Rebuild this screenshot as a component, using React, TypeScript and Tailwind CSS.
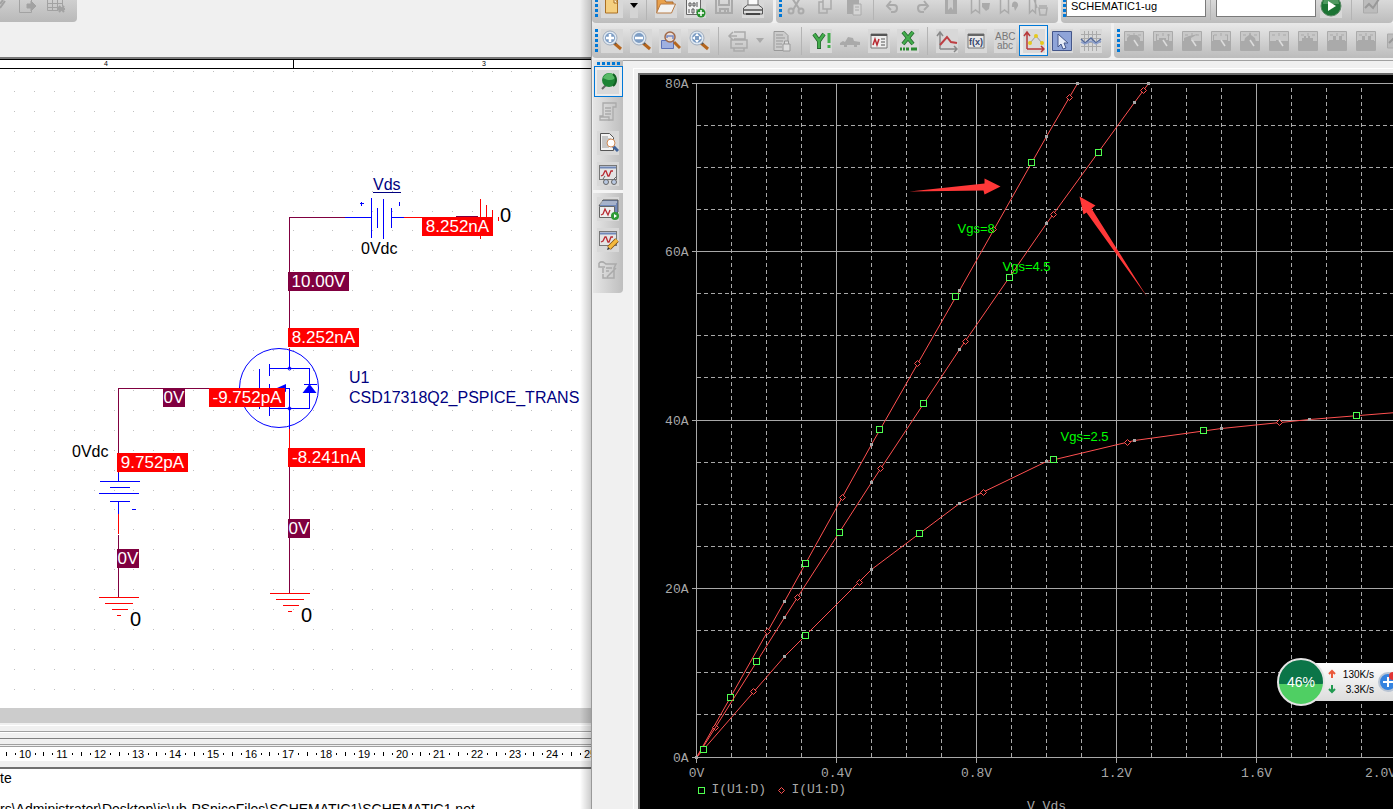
import React from 'react';

type Point = [number, number];

const IconSvg = ({ children }: { children: React.ReactNode }) => (
  <svg width="22" height="24" viewBox="0 0 22 24" fill="none" aria-hidden="true">
    {children}
  </svg>
);

const Lens = () => (
  <>
    <path d="M13 14l7 6" stroke="#b5651d" strokeWidth="3" />
    <path d="M13 13l2 2" stroke="#555" strokeWidth="2" />
    <circle cx="9" cy="9" r="6" fill="#7d9dc4" stroke="#dfe8f2" strokeWidth="2" />
    <circle cx="9" cy="9" r="7" stroke="#8796ab" strokeWidth="0.7" />
  </>
);

const PlotWindow = () => (
  <>
    <rect x="2.500" y="3.500" width="17" height="14" fill="#e4e4e4" stroke="#777" />
    <path d="M3 5.500h16" stroke="#7088b8" strokeWidth="2" />
    <path d="M4 14l2-1 2-4h1l2 5h1l2-5h2" stroke="#b82a32" strokeWidth="1.300" />
  </>
);

const icons: Record<string, React.ReactNode> = {
  'New file': (
    <>
      <path d="M4.500 4h12v15h-12z" fill="#f5cf7f" stroke="#aa6f22" />
      <path d="M13 4l4 5h-4z" fill="#fff3d0" stroke="#aa6f22" />
    </>
  ),
  'Open': (
    <>
      <path d="M2 18V5h7l2 3h7v4" fill="#e9a14c" stroke="#a9662a" />
      <path d="M1.500 19l4-9h15l-4 9z" fill="#f3f3f3" stroke="#b77b45" />
    </>
  ),
  'Append file': (
    <>
      <path d="M2.500 1.500h14v19h-14z" fill="#f2f2f2" stroke="#666" />
      <path d="M5 9h2v3H5zM9 9h2v3H9zM13 8v5M5 15v4M8 15h2v4H8zM13 15v4" stroke="#555" />
      <circle cx="17" cy="19" r="4.500" fill="#26902c" />
      <path d="M17 16v6M14 19h6" stroke="#fff" strokeWidth="1.500" />
    </>
  ),
  'Save': (
    <path d="M3 4h16v15H3zM6 4v7h10V4M7 19v-4h8v4M12 16v3" stroke="#aaa" strokeWidth="2" />
  ),
  'Print': (
    <>
      <path d="M6 12V2h10v10" fill="#fafafa" stroke="#777" />
      <path d="M1.500 20v-6l4-3h11l4 3v6z" fill="#ddd" stroke="#555" />
      <path d="M2 16h18" stroke="#777" strokeWidth="2" />
      <path d="M4 20h14" stroke="#444" strokeWidth="2" />
    </>
  ),
  'Cut': (
    <>
      <path d="M7 4l8 12M15 4L8 16" stroke="#aaa" strokeWidth="2" />
      <circle cx="6" cy="17" r="2.500" stroke="#aaa" strokeWidth="2" />
      <circle cx="16" cy="17" r="2.500" stroke="#aaa" strokeWidth="2" />
    </>
  ),
  'Copy': <path d="M9 4h8v11H9zM9 8H5v11h8v-4" stroke="#aaa" strokeWidth="1.500" />,
  'Paste': (
    <>
      <path d="M4 5h12v15H4z" fill="#aaa" />
      <path d="M10 10h8v11h-8z" fill="#d5d5d5" stroke="#aaa" />
      <path d="M12 13h4M12 16h4" stroke="#aaa" />
    </>
  ),
  'Undo': <path d="M9 7l-4 5 4 4M5 11h7c4 0 4 6 0 7H9" stroke="#aaa" strokeWidth="2" />,
  'Redo': <path d="M13 7l4 5-4 4M17 11h-7c-4 0-4 6 0 7h3" stroke="#aaa" strokeWidth="2" />,
  'Toggle bookmark': (
    <>
      <path d="M5 2h12v18H5z" fill="#aaa" />
      <path d="M8 4v12l3-3 2 3V4" fill="#ccc" />
    </>
  ),
  'Next bookmark': (
    <>
      <path d="M2.500 2v17l4-3 4 3V2" stroke="#aaa" strokeWidth="1.500" />
      <path d="M13 9h8l-1 6-3 2-4-4z" fill="#aaa" />
    </>
  ),
  'Previous bookmark': (
    <>
      <path d="M2.500 2v17l4-3 4 3V2" stroke="#aaa" strokeWidth="1.500" />
      <path d="M14 13c-1-8 7-6 6-1l-3 5-1-4z" fill="#aaa" />
    </>
  ),
  'Clear bookmarks': (
    <>
      <path d="M2.500 2v17l3-3 3 3V2M6 2l4 12" stroke="#aaa" strokeWidth="1.500" />
      <path d="M12 14h8l-1 7h-6zM12 12h8" stroke="#aaa" strokeWidth="1.500" />
    </>
  ),
  'Run': (
    <>
      <circle cx="11" cy="12" r="10" fill="#1c7434" stroke="#5d8a68" />
      <path d="M3 10a8 8 0 0 1 16 0z" fill="#4e9960" />
      <path d="M8 7v10l8-5z" fill="#fff" />
    </>
  ),
  'View results': (
    <>
      <path d="M3.500 5h14v14h-14z" fill="#bcbcbc" stroke="#aaa" />
      <path d="M5 14l4-4 4 4 6-9" stroke="#999" strokeWidth="2" />
    </>
  ),
  'Zoom in': (
    <>
      <Lens />
      <path d="M9 5v8M5 9h8" stroke="#fff" strokeWidth="2.500" />
    </>
  ),
  'Zoom out': (
    <>
      <Lens />
      <path d="M5 9h8" stroke="#fff" strokeWidth="2.500" />
    </>
  ),
  'Zoom area': (
    <>
      <path d="M2.500 11.500h12v8h-12z" fill="#9fb0e0" stroke="#5c72b8" />
      <path d="M15 13l6 6" stroke="#b5651d" strokeWidth="3" />
      <circle cx="11" cy="8" r="5" fill="#e8dcd6" stroke="#a06848" strokeWidth="1.500" />
      <path d="M8 9V7h6v3" stroke="#7488c4" strokeWidth="1.500" />
    </>
  ),
  'Zoom fit': (
    <>
      <Lens />
      <path d="M9 4l2 3H7zM9 14l2-3H7zM4 9l3-2v4zM14 9l-3-2v4z" fill="#fff" />
    </>
  ),
  'Log axis': (
    <path d="M7 3h11v7H7M2 7h8M6 3L2 7l4 4M4 11h16v8H4zM8 15h8M7 19v3h10v-3" stroke="#aaa" strokeWidth="1.500" />
  ),
  'Lock file': (
    <>
      <path d="M3 2.500h10l4 4v15H3z" fill="#ccc" stroke="#999" />
      <path d="M5 6h7M5 9h9M5 12h7M5 15h6M5 18h6" stroke="#999" />
      <path d="M12 15h7v7h-7zM13.500 15v-3h4v3" fill="#ddd" stroke="#999" />
    </>
  ),
  'Y axis': (
    <>
      <path d="M4 5l5 7 5-7M9 12v8" stroke="#24642e" strokeWidth="4" />
      <path d="M4 5l5 7 5-7M9 12v7" stroke="#43ad4c" strokeWidth="2.500" />
      <path d="M19 4v10M19 16v3" stroke="#43ad4c" strokeWidth="3" />
    </>
  ),
  'Fourier': (
    <>
      <path d="M1 14l3-2 2 1 3-5 5 1 1 3 6 1v3H1z" fill="#aaa" />
      <path d="M5 15h3v3H5zM15 15h3v3h-3z" fill="#aaa" />
    </>
  ),
  'Performance analysis': (
    <>
      <path d="M3 5h16v14H3z" fill="#eee" stroke="#777" />
      <path d="M3 6h16" stroke="#555" strokeWidth="2" />
      <path d="M5 16l2-6 2 6 2-6" stroke="#b82a32" strokeWidth="1.500" />
      <path d="M13 10h4M13 13h4M13 16h4" stroke="#555" />
    </>
  ),
  'X axis': (
    <>
      <path d="M6 3l10 12M16 3L6 15" stroke="#24642e" strokeWidth="4" />
      <path d="M6 3l10 12M16 3L6 15" stroke="#43ad4c" strokeWidth="2.500" />
      <path d="M3 20h2M6 20h2M9 20h3M14 20h6" stroke="#2a8a30" strokeWidth="3" />
    </>
  ),
  'Add trace': (
    <>
      <path d="M4 20V3M1 7l3-4 3 4M4 20h17M18 17l3 3-3 3" stroke="#888" strokeWidth="1.500" />
      <path d="M4 16l7-8 4 5 6 1" stroke="#bd3f43" strokeWidth="2" />
    </>
  ),
  'Evaluate measurement': (
    <>
      <path d="M3 5h16v14H3z" fill="#e8e8e8" stroke="#777" />
      <path d="M3 6h16" stroke="#666" strokeWidth="2" />
      <text x="4" y="16" fill="#34446c" className="font-['Liberation_Sans'] text-[9px] font-bold">f(x)</text>
    </>
  ),
  'Text label': (
    <>
      <text x="1" y="11" fill="#777" className="font-['Liberation_Sans'] text-[10px]">ABC</text>
      <text x="3" y="20" fill="#777" className="font-['Liberation_Sans'] text-[10px]">abc</text>
    </>
  ),
  'Mark data points': (
    <>
      <path d="M4 20V3M1 7l3-4 3 4M4 20h17M18 17l3 3-3 3" stroke="#b8383a" strokeWidth="1.500" />
      <path d="M7 14l6-7 6 7" stroke="#999" />
      <circle cx="7" cy="14" r="2" fill="#e6c91c" />
      <circle cx="13" cy="7" r="2" fill="#e6c91c" />
      <circle cx="19" cy="14" r="2" fill="#e6c91c" />
    </>
  ),
  'Toggle cursor': (
    <>
      <path d="M1.500 2.500h19v19h-19z" fill="#8fa4d8" stroke="#44568a" />
      <path d="M7 5v13l3-3 2 5 3-1-2-5h4z" fill="#e8edf8" stroke="#44568a" />
    </>
  ),
  'Cursor peak': (
    <>
      <path d="M1 5.500h20M1 9.500h20M1 13.500h20M1 17.500h20M4.500 2v20M8.500 2v20M12.500 2v20M16.500 2v20" stroke="#aaa" />
      <path d="M1 10l4 4 6-5 5 5 5-4" stroke="#54699a" strokeWidth="1.500" />
      <path d="M1 13l4 2 6-3 5 3 5-3" stroke="#8da0cc" strokeWidth="1.500" />
    </>
  ),
  'Pin': (
    <>
      <path d="M5 19l5-5" stroke="#666" strokeWidth="2" />
      <ellipse cx="12" cy="10" rx="7" ry="7" fill="#1d8435" />
      <path d="M6 8c2-6 10-6 13-2-1 5-8 5-13 2z" fill="#58b966" />
      <path d="M16 4c4 3 4 9 0 12" stroke="#126023" strokeWidth="2" />
    </>
  ),
  'Script': (
    <path d="M6 3h13v4h-3v13H3v-4h3V3zM8 8h6M8 11h6M8 14h6M3 17h9v4" stroke="#aaa" strokeWidth="1.300" />
  ),
  'View output file': (
    <>
      <path d="M3.500 2.500h9l4 4v13h-13z" fill="#f3f3f3" stroke="#555" />
      <path d="M5 6h6M5 8h9M5 10h7M5 12h6M5 14h6M5 16h7" stroke="#999" />
      <path d="M16 15l5 5" stroke="#40649a" strokeWidth="3" />
      <circle cx="14" cy="12" r="4" fill="#fff" stroke="#d08a55" />
    </>
  ),
  'View simulation': (
    <>
      <PlotWindow />
      <path d="M6 17l2-3M17 17l3-3" stroke="#666" />
      <circle cx="9" cy="20" r="2.500" fill="#b9c9e2" stroke="#666" />
      <circle cx="17" cy="20" r="2.500" fill="#b9c9e2" stroke="#666" />
    </>
  ),
  'Simulation queue': (
    <>
      <path d="M2 9l4-6h15v12l-3 3" fill="#7088b8" stroke="#555" />
      <path d="M3 7h16M4 5h16" stroke="#ddd" />
      <path d="M2.500 9.500h15v11h-15z" fill="#eee" stroke="#666" />
      <path d="M4 18l2-1 2-5 3 6 2-5" stroke="#b82a32" strokeWidth="1.300" />
      <circle cx="18" cy="19" r="4" fill="#2e9a35" />
      <path d="M17 17v4l3-2z" fill="#fff" />
    </>
  ),
  'Edit profile': (
    <>
      <PlotWindow />
      <path d="M12 20l8-8" stroke="#7a4a10" strokeWidth="5" />
      <path d="M12 20l8-8" stroke="#f4b93c" strokeWidth="3.500" />
      <path d="M10 22l3-1-2-2z" fill="#333" />
    </>
  ),
  'Edit script': (
    <path d="M2 4c4-3 5 0 7 1h10l-2 4v10H6v-4M2 4v4h6M6 9v5M9 9h6M9 12h3M19 9l-9 9" stroke="#aaa" strokeWidth="1.500" />
  ),
};

const ToolButton = ({ name, lit = false }: { name: string; lit?: boolean }) => (
  <button
    type="button"
    aria-label={name}
    className={`flex h-6 w-[22px] shrink-0 items-center justify-center ${lit ? 'bg-[#d8d8d8]' : ''}`}
  >
    <IconSvg>{icons[name]}</IconSvg>
  </button>
);

const SelectedButton = ({ name }: { name: string }) => (
  <button
    type="button"
    aria-label={name}
    aria-pressed="true"
    className="-mx-1 flex h-[31px] w-[29px] shrink-0 items-center justify-center border border-[#0078d7] bg-[#ececec]"
  >
    <span className="bg-[#dadada]">
      <IconSvg>{icons[name]}</IconSvg>
    </span>
  </button>
);

const DropButton = ({ name, lit = false }: { name: string; lit?: boolean }) => (
  <button
    type="button"
    aria-label={name}
    className={`flex h-6 w-2 shrink-0 items-center ${lit ? 'bg-[#d4d4d4] text-black' : 'text-[#aaa]'}`}
  >
    <svg width="8" height="5" viewBox="0 0 8 5" aria-hidden="true">
      <path d="M0 0h8L4 5z" fill="currentColor" />
    </svg>
  </button>
);

const Separator = () => <span className="mx-px h-7 w-px shrink-0 bg-[#b4b4b4]" />;

const Handle = () => (
  <span className="flex shrink-0 flex-col gap-[2px]">
    {[0, 1, 2, 3, 4].map((i) => (
      <span key={i} className="size-[3px] bg-[#0078d7]" />
    ))}
  </span>
);

const ToolGroup = ({ children, className = '' }: { children: React.ReactNode; className?: string }) => (
  <div className={`flex shrink-0 items-center gap-[3px] rounded-b bg-linear-to-b from-[#e9e9e9] to-[#bcbcbc] pl-[3px] pr-[9px] ${className}`}>
    <Handle />
    <div className="flex items-center gap-[7px]">{children}</div>
  </div>
);

const probeShapes = [
  'M4 13V9l3-3h7l3 3v4z',
  'M4 13V5h1v6h2V9h7v2h2V5h1v8z',
  'M3 13V9l5-2 9-2-7 4v4z',
  'M3 13V6h1v5h13V6h1v7z',
  'M5 13l1-4 4-3 1-3 1 3 4 3 1 4z',
  'M3 12h5v-1h3v1h8v1H3z',
  'M5 13V9h2V7h2v2h2V7h2v2h3v4z',
  'M3 13v-2h4V7h3v4h3V7h3v4h3v2z',
  'M3 13v-2h4V7h3v4h3V7h3v4h3v2z',
];

const probeNames = [
  'Cursor maximum', 'Cursor trough', 'Cursor slope', 'Cursor minimum', 'Cursor point',
  'Cursor search', 'Next transition', 'Previous transition', 'Mark label',
];

const TopToolbar = () => (
  <div className="flex h-[23px] items-end gap-[3px] overflow-hidden">
    <ToolGroup className="h-[35px]">
      <ToolButton name="New file" lit />
      <DropButton name="New file options" lit />
      <Separator />
      <ToolButton name="Open" lit />
      <ToolButton name="Append file" lit />
      <ToolButton name="Save" />
      <ToolButton name="Print" lit />
    </ToolGroup>
    <ToolGroup className="h-[35px]">
      <ToolButton name="Cut" />
      <ToolButton name="Copy" />
      <ToolButton name="Paste" />
      <Separator />
      <ToolButton name="Undo" />
      <ToolButton name="Redo" />
      <ToolButton name="Toggle bookmark" />
      <ToolButton name="Next bookmark" />
      <ToolButton name="Previous bookmark" />
      <ToolButton name="Clear bookmarks" />
    </ToolGroup>
    <div className="flex h-[35px] flex-1 items-center rounded-b bg-linear-to-b from-[#e9e9e9] to-[#bcbcbc] pl-[2px]">
      <Handle />
      <input
        aria-label="Simulation profile"
        defaultValue="SCHEMATIC1-ug"
        className="h-[22px] w-[140px] shrink-0 border border-[#7a7a7a] bg-white px-1 font-['Liberation_Sans',sans-serif] text-[11px] text-black"
      />
      <div className="flex items-center gap-1 pl-[3px]">
        <Separator />
        <input aria-label="Search" className="h-[22px] w-[100px] shrink-0 border border-[#7a7a7a] bg-white px-1 text-[11px]" />
        <ToolButton name="Run" lit />
        <div className="flex items-center gap-[7px] pl-1">
          <Separator />
          <ToolButton name="View results" />
        </div>
      </div>
    </div>
  </div>
);

const ProbeToolbar = () => (
  <div className="flex h-[35px] gap-[3px] overflow-hidden">
    <ToolGroup>
      <ToolButton name="Zoom in" lit />
      <ToolButton name="Zoom out" lit />
      <ToolButton name="Zoom area" lit />
      <ToolButton name="Zoom fit" lit />
      <Separator />
      <ToolButton name="Log axis" />
      <DropButton name="Axis options" />
      <ToolButton name="Lock file" />
      <Separator />
      <ToolButton name="Y axis" lit />
      <ToolButton name="Fourier" />
      <ToolButton name="Performance analysis" lit />
      <ToolButton name="X axis" lit />
      <Separator />
      <ToolButton name="Add trace" lit />
      <ToolButton name="Evaluate measurement" lit />
      <ToolButton name="Text label" lit />
      <SelectedButton name="Mark data points" />
      <ToolButton name="Toggle cursor" lit />
      <ToolButton name="Cursor peak" lit />
    </ToolGroup>
    <ToolGroup className="flex-1">
      {probeShapes.map((shape, i) => (
        <button key={probeNames[i]} type="button" aria-label={probeNames[i]} className="h-6 w-[22px] shrink-0">
          <IconSvg>
            <path d="M1.500 2.500h19v19h-19z" fill="#c8c8c8" stroke="#aaa" />
            <path d={shape} fill="#aaa" />
            <path d="M2 12h18v10H2z" fill="#aaa" />
            <path d="M4 6h3M11 4v3M15 6h3" stroke="#aaa" />
            {i < 6 && <path d="M11 11l4 6" stroke="#ddd" strokeWidth="1.500" />}
          </IconSvg>
        </button>
      ))}
      <ToolButton name="View results" />
    </ToolGroup>
  </div>
);

const SideDock = () => (
  <div className="ml-px flex w-[30px] shrink-0 flex-col items-center self-start rounded-br bg-linear-to-r from-[#e6e6e6] to-[#bebebe] pt-[2px] pb-[10px]">
    <span className="flex gap-[2px] pb-px">
      {[0, 1, 2, 3, 4].map((i) => (
        <span key={i} className="size-[3px] bg-[#0078d7]" />
      ))}
    </span>
    <div className="flex flex-col items-center gap-[7px]">
      <div className="-mb-1 flex">
        <SelectedButton name="Pin" />
      </div>
      <ToolButton name="Script" />
      <ToolButton name="View output file" lit />
      <ToolButton name="View simulation" lit />
    </div>
    <span className="my-1 h-[3px] w-full bg-[#f4f4f4]" />
    <div className="flex flex-col gap-[7px]">
      <ToolButton name="Simulation queue" lit />
      <ToolButton name="Edit profile" lit />
      <ToolButton name="Edit script" />
    </div>
  </div>
);

// ---- plot ----

// origin is the top left corner of the grid, 35px per 0.1V
const GRID_H = 674;
const STEP_X = 35;
const STEP_Y = GRID_H / 16;

const curves: { line: Point[]; squares: Point[]; diamonds: Point[] }[] = [
  {
    line: [[0, 674], [88, 518], [175, 361], [263, 207], [350, 53], [381, 0]],
    squares: [[34, 614], [109, 480], [183, 346], [259, 213], [335, 79]],
    diamonds: [[19, 644], [71, 548], [146, 414], [221, 280], [297, 146], [373, 14]],
  },
  {
    line: [[0, 674], [88, 534], [175, 399], [263, 266], [350, 140], [438, 19], [452, 0]],
    squares: [[60, 578], [143, 449], [227, 320], [313, 194], [402, 69]],
    diamonds: [[101, 514], [184, 385], [269, 258], [357, 131], [447, 7]],
  },
  {
    line: [[0, 674], [7, 666], [88, 573], [175, 486], [263, 420], [350, 378], [438, 357], [525, 345], [613, 336], [700, 329], [788, 322]],
    squares: [[7, 666], [109, 552], [223, 450], [357, 376], [507, 347], [660, 332]],
    diamonds: [[57, 608], [163, 499], [287, 409], [431, 359], [583, 339]],
  },
];

const columns = Array.from({ length: 60 }, (_, i) => i);
const rows = Array.from({ length: 17 }, (_, i) => i);

const Plot = () => (
  <svg className="block h-full w-full" role="img" aria-label="I(U1:D) against V_Vds">
    <g transform="translate(56.5 8.5)">
      <g stroke="#a8a8a8" shapeRendering="crispEdges">
        {columns.map((i) =>
          i % 4 === 0 ? (
            <path key={i} d={`M${i * STEP_X} 0V${GRID_H + 5}`} />
          ) : (
            <path key={i} d={`M${i * STEP_X} 4V${GRID_H}`} strokeDasharray="4 3" />
          ),
        )}
        {rows.map((i) =>
          i % 4 === 0 ? (
            <path key={i} d={`M-5 ${Math.floor(i * STEP_Y)}H2100`} />
          ) : (
            <path key={i} d={`M0 ${Math.floor(i * STEP_Y)}H2100`} strokeDasharray="4 3" />
          ),
        )}
      </g>
      {curves.map((curve, n) => (
        <g key={n}>
          <polyline points={curve.line.join(' ')} fill="none" stroke="#ff5050" />
          {curve.line.map(([x, y]) => (
            <rect key={x} x={x - 1.5} y={y - 1.5} width="3" height="3" fill="#a8a8a8" />
          ))}
          {curve.diamonds.map(([x, y]) => (
            <path key={x} d={`M${x - 3} ${y}l3-3 3 3-3 3z`} fill="#000" stroke="#ff5050" />
          ))}
          {curve.squares.map(([x, y]) => (
            <rect key={x} x={x - 3} y={y - 3} width="6" height="6" fill="#000" stroke="#50ff50" />
          ))}
        </g>
      ))}
      <g fill="#00ff00" className="font-['Liberation_Sans',sans-serif] text-[13px]">
        <text x="261" y="149">Vgs=8</text>
        <text x="306" y="187">Vgs=4.5</text>
        <text x="364" y="357">Vgs=2.5</text>
      </g>
      <g fill="#ff3838">
        <path d="M213 108L288 100V95L304 103L288 111L287 107Z" />
        <path d="M383 113L399 122L395 125L451 214L390 129L387 131Z" />
      </g>
      <g fill="#a8a8a8" className="font-['Liberation_Mono',monospace] text-[13px]">
        {['80A', '60A', '40A', '20A', '0A'].map((label, i) => (
          <text key={label} x="-8" y={Math.floor(i * 4 * STEP_Y) + 4} textAnchor="end">{label}</text>
        ))}
        {['0V', '0.4V', '0.8V', '1.2V', '1.6V', '2.0V'].map((label, i) => (
          <text key={label} x={i === 5 ? 684 : i * 140} y="693" textAnchor="middle">{label}</text>
        ))}
        <text x="15" y="709">I(U1:D)</text>
        <text x="95" y="709">I(U1:D)</text>
        <text x="350" y="726" textAnchor="middle">V_Vds</text>
      </g>
      <rect x="2" y="704" width="6" height="6" fill="none" stroke="#50ff50" />
      <path d="M82 707l3-3 3 3-3 3z" fill="none" stroke="#ff5050" />
    </g>
  </svg>
);

// ---- schematic ----

const probes = [
  { x: 422, y: 217, w: 71, text: '8.252nA', fill: '#ff0000' },
  { x: 288, y: 272, w: 61, text: '10.00V', fill: '#800040' },
  { x: 288, y: 328, w: 71, text: '8.252nA', fill: '#ff0000' },
  { x: 163, y: 388, w: 22, text: '0V', fill: '#800040' },
  { x: 209, y: 388, w: 76, text: '-9.752pA', fill: '#ff0000' },
  { x: 288, y: 448, w: 77, text: '-8.241nA', fill: '#ff0000' },
  { x: 117, y: 453, w: 71, text: '9.752pA', fill: '#ff0000' },
  { x: 288, y: 519, w: 22, text: '0V', fill: '#800040' },
  { x: 117, y: 549, w: 22, text: '0V', fill: '#800040' },
];

const dots = Array.from({ length: 29 * 32 }, (_, i) => [
  Math.round(14 + (i % 29) * 19.9),
  Math.round(71 + Math.floor(i / 29) * 19.93),
]);

const Schematic = () => (
  <svg className="block h-full w-full" role="img" aria-label="Schematic">
    <g transform="translate(0 -69)">
      {dots.map(([x, y]) => (
        <rect key={`${x}-${y}`} x={x} y={y} width="1" height="1" fill="#c0c0c0" />
      ))}
      <g transform="translate(.5 .5)" fill="none" shapeRendering="crispEdges">
        <path d="M118 473V388H240M118 534V597M289 330V217H344M289 465V593" stroke="#800040" />
        <path d="M455 216H477" stroke="#800040" strokeWidth="2" />
        <path
          d="M344 217H371M371 197V237M377 207V227M383 198V238M391 207V227M391 217H403M359 203H363M361 201V205M399 201V205M118 472V481M99 481H139M109 487H129M98 493H138M109 501H129M118 501V513M131 509H135M259 368V408M269 363V375M269 383V394M269 402V415M269 368H309V408H269M289 348V368M285 388H289V428M303 384H316"
          stroke="#0000ff"
        />
        <path
          d="M403 217H425M480 198V238M486 204V231M492 209V225M498 216V220M118 513V533M289 347V350M289 428V450M98 597H138M104 603H132M111 609H127M116 615H120M269 593H309M275 599H303M282 605H298M287 611H291"
          stroke="#ff0000"
        />
      </g>
      <circle cx="279" cy="388" r="39.500" fill="none" stroke="#0000ff" />
      <circle cx="289.500" cy="368.500" r="1.500" fill="none" stroke="#0000ff" />
      <circle cx="289.500" cy="408.500" r="1.500" fill="none" stroke="#0000ff" />
      <path d="M309.500 384l7 9h-14zM277 388l9-4v8z" fill="#0000ff" />
      <g className="font-['Liberation_Sans',sans-serif] text-[17px]">
        {probes.map((p) => (
          <g key={`${p.x}-${p.y}`}>
            <rect x={p.x} y={p.y} width={p.w} height="19" fill={p.fill} />
            <text x={p.x + p.w / 2} y={p.y + 15} textAnchor="middle" fill="#fff">{p.text}</text>
          </g>
        ))}
      </g>
      <g className="font-['Liberation_Sans',sans-serif] text-[16px]">
        <text x="373" y="190" fill="#000080">Vds</text>
        <path d="M373 192.500H401" stroke="#000080" />
        <text x="361" y="254">0Vdc</text>
        <text x="72" y="457">0Vdc</text>
        <text x="349" y="383" fill="#000080">U1</text>
        <text x="349" y="403" fill="#000080">CSD17318Q2_PSPICE_TRANS</text>
      </g>
      <g className="font-['Liberation_Sans',sans-serif] text-[20px]">
        <text x="500" y="222">0</text>
        <text x="130" y="626">0</text>
        <text x="301" y="622">0</text>
      </g>
    </g>
  </svg>
);

const Ruler = () => (
  <svg className="block h-[14px] w-full" aria-label="Ruler">
    {Array.from({ length: 16 }, (_, i) => {
      const x = Math.round(24.5 + i * 37.7);
      return (
        <g key={i}>
          <rect x={x - 19} y="5" width="1" height="4" />
          <rect x={x - 10} y="6" width="1" height="2" />
          <rect x={x + 10} y="6" width="1" height="2" />
          <text x={x} y="11" textAnchor="middle" className="font-['Liberation_Sans_Narrow','Liberation_Sans',sans-serif] text-[11px]">
            {i + 10}
          </text>
        </g>
      );
    })}
  </svg>
);

const CapturePane = () => (
  <section className="relative flex w-[42.5%] shrink-0 flex-col overflow-hidden bg-[#f0f0f0] text-black">
    <div className="h-[57px] shrink-0">
      <div className="h-[22px] w-[77px] rounded-br bg-linear-to-b from-[#cfcfcf] to-[#b9b9b9]">
        <svg width="77" height="22" viewBox="0 0 77 22" fill="none" stroke="#a2a2a2" aria-hidden="true">
          <path d="M0 4l3-4M0 8l5-7" strokeWidth="2" />
          <path d="M19.500 0v12.500h12V9M31.500 3V0" />
          <path d="M27 4h4V1l5 5-5 5V8h-4z" fill="#a2a2a2" />
          <path d="M47.500 0v10.500h11M47 3.500h15M47 7.500h12M52.500 0v10M57.500 0v10M62.500 0v6" />
          <path d="M59 6l5 6M64 6l-5 6M58 9h7" strokeWidth="2" />
        </svg>
      </div>
    </div>
    <div className="flex h-3 shrink-0 border-t-2 border-b border-t-[#777] border-b-black bg-white font-['Liberation_Sans',sans-serif] text-[7px] leading-[8px]">
      <div className="w-[294px] border-t border-r border-black pl-[104px]">4</div>
      <div className="flex-1 border-t border-black pl-[188px]">3</div>
    </div>
    <div className="min-h-0 flex-1 bg-white">
      <Schematic />
    </div>
    <div className="h-[15px] shrink-0 bg-[#ccc]" />
    <div className="flex h-[22px] shrink-0 flex-col justify-between border-b border-[#a0a0a0] pt-[2px]">
      <span className="h-px bg-white" />
      <span className="h-[2px] border-t border-[#a0a0a0] bg-white" />
      <span className="h-px bg-[#808080]" />
      <span />
    </div>
    <div className="h-[2px] shrink-0 border-b border-[#a0a0a0]" />
    <div className="shrink-0 bg-white">
      <Ruler />
    </div>
    <div className="h-2 shrink-0 border-b-2 border-[#707070]" />
    <div className="h-10 shrink-0 overflow-hidden bg-white font-['Liberation_Sans',sans-serif] text-[14px] leading-4 whitespace-nowrap">
      <p className="h-8 pt-px">te</p>
      <p>rs\Administrator\Desktop\js\ub-PSpiceFiles\SCHEMATIC1\SCHEMATIC1.net</p>
    </div>
    <div className="pointer-events-none absolute inset-y-0 right-0 w-3 border-r border-[#999] bg-linear-to-r from-transparent to-black/20" />
  </section>
);

const SpeedWidget = () => (
  <aside className="absolute right-0 bottom-[103px] flex h-12 w-[116px] items-center overflow-hidden font-['Liberation_Sans',sans-serif]">
    <div className="z-10 flex size-12 shrink-0 items-center justify-center rounded-full border-2 border-[#e4e4e4] bg-linear-to-b from-[#0b7548] from-55% to-[#4fcf63] to-55% text-[14px] text-white">
      46%
    </div>
    <div className="-ml-6 flex h-[38px] flex-1 items-center bg-linear-to-b from-white to-[#dcdcdc] pl-[27px]">
      <svg width="8" height="26" viewBox="0 0 8 26" fill="none" strokeWidth="2" className="shrink-0" aria-hidden="true">
        <path d="M4 9V2M1 5l3-3 3 3" stroke="#ea5a3c" />
        <path d="M4 16v7M1 20l3 3 3-3" stroke="#219a50" />
      </svg>
      <div className="w-[38px] shrink-0 text-right text-[10px] leading-[15px] text-black">
        <p>130K/s</p>
        <p>3.3K/s</p>
      </div>
      <button type="button" aria-label="Speed up" className="ml-1 shrink-0">
        <svg width="20" height="20" viewBox="0 0 20 20" aria-hidden="true">
          <circle cx="10" cy="10" r="9" fill="#3583df" stroke="#b8c4d4" strokeWidth="2" />
          <path d="M10 5v10M5 10h10" stroke="#fff" strokeWidth="2" />
          <circle cx="15" cy="4" r="4" fill="#e03434" />
        </svg>
      </button>
    </div>
  </aside>
);

const ProbePane = () => (
  <section className="relative flex min-w-0 flex-1 flex-col overflow-hidden bg-[#f0f0f0]">
    <TopToolbar />
    <ProbeToolbar />
    <div className="flex min-h-0 flex-1 pt-[2px]">
      <SideDock />
      <div className="flex min-w-0 flex-1 flex-col border-t border-[#a0a0a0] pt-[7px] pl-[10px]">
        <div className="min-h-0 flex-1 border-t border-l border-white pt-1 pl-1">
          <div className="h-full border-t-2 border-l-2 border-[#696969] bg-black">
            <Plot />
          </div>
        </div>
      </div>
    </div>
    <SpeedWidget />
  </section>
);

const App = () => (
  <main className="flex h-screen overflow-hidden">
    <CapturePane />
    <ProbePane />
  </main>
);

export default App;
